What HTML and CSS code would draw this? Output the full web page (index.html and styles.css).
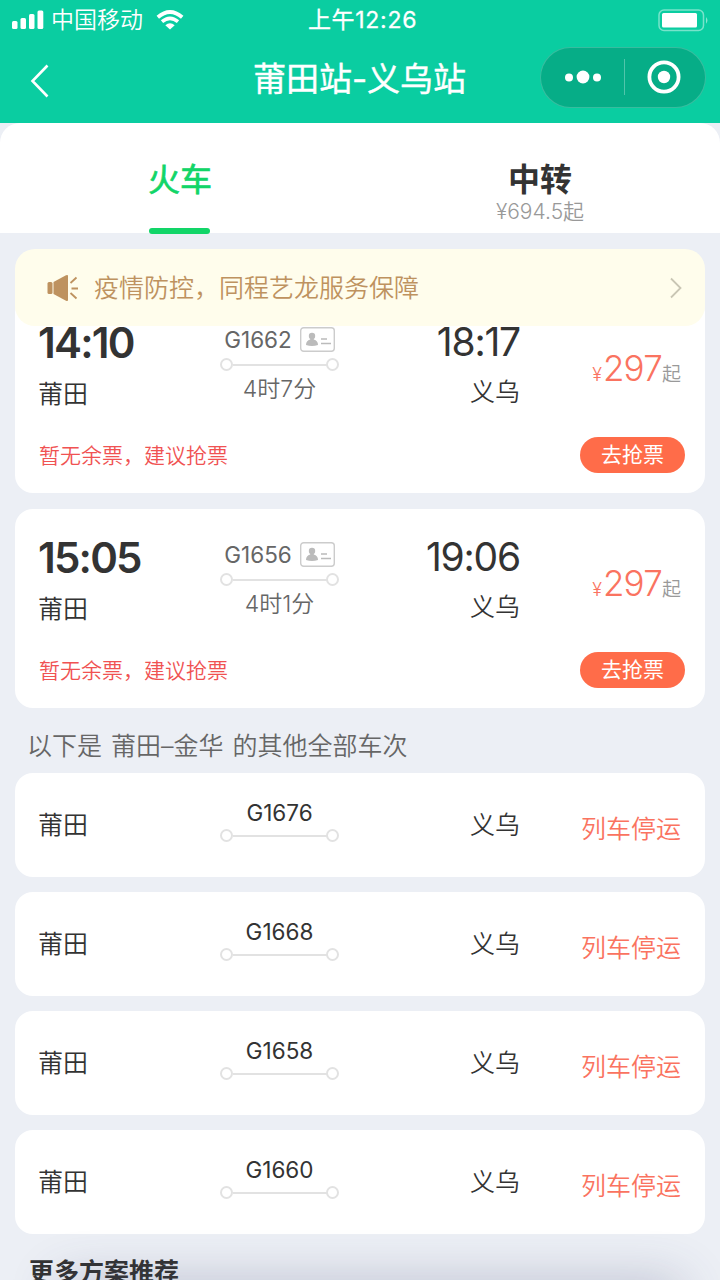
FILE: index.html
```
<!DOCTYPE html>
<html lang="zh-CN">
  <head>
    <meta charset="UTF-8" />
    <meta name="viewport" content="width=device-width, initial-scale=1.0" />
    <title>莆田站-义乌站</title>
    <link rel="stylesheet" href="styles.css">
  </head>

  <body>
    <header class="header">
      <div class="status-bar">
        <div class="carrier">
          <svg class="signal" width="32" height="20" viewBox="0 0 32 20" fill="#fff">
            <rect x="0" y="11" width="5.5" height="8" rx="1.5" />
            <rect x="8.5" y="8" width="5.5" height="11" rx="1.5" />
            <rect x="17" y="4" width="5.5" height="15" rx="1.5" />
            <rect x="25.5" y="0.5" width="5.8" height="18.5" rx="1.5" />
          </svg>
          <span class="carrier-name">中国移动</span>
          <svg class="wifi" width="28" height="20" viewBox="0 0 28 20" fill="none" stroke="#fff">
            <path d="M1.8 7.2 Q14 -3.2 26.2 7.2" stroke-width="3.8" />
            <path d="M6 11.7 Q14 5 22 11.7" stroke-width="3.6" />
            <path d="M9.3 15.2 Q14 11.3 18.7 15.2 L14 19.6 Z" fill="#fff" stroke="none" />
          </svg>
        </div>
        <div class="clock">上午12:26</div>
        <svg class="battery" width="51" height="23" viewBox="0 0 51 23">
          <rect x="1" y="1" width="44.5" height="20.5" rx="5" fill="none" stroke="#fff" stroke-opacity=".45" stroke-width="1.5" />
          <rect x="4" y="4" width="35" height="14.5" rx="1.5" fill="#fff" />
          <path d="M48 8 Q51 11.3 48 14.8 Z" fill="#fff" fill-opacity=".5" />
        </svg>
      </div>
      <div class="nav-bar">
        <svg class="back" width="20" height="34" viewBox="0 0 20 34" fill="none" stroke="#fff" stroke-width="2.6">
          <path d="M17.5 1.5 L2.5 17 L17.5 32.5" />
        </svg>
        <h1 class="title">莆田站-义乌站</h1>
        <div class="capsule">
          <svg width="36" height="14" viewBox="0 0 36 14" fill="#fff">
            <circle cx="4" cy="7.5" r="4" />
            <circle cx="18" cy="7" r="6.4" />
            <circle cx="32" cy="7.5" r="4" />
          </svg>
          <span class="capsule-line"></span>
          <svg width="34" height="34" viewBox="0 0 34 34">
            <circle cx="17" cy="17" r="14.6" fill="none" stroke="#fff" stroke-width="3.8" />
            <circle cx="17" cy="17" r="6.2" fill="#fff" />
          </svg>
        </div>
      </div>
    </header>

    <nav class="tabs">
      <div class="tab tab-active">
        <span class="tab-name">火车</span>
      </div>
      <div class="tab">
        <span class="tab-name">中转</span>
        <span class="tab-price">¥694.5起</span>
      </div>
    </nav>

    <main class="content">
      <div class="notice">
        <svg width="32" height="28" viewBox="0 0 32 28">
          <rect x="0.5" y="8" width="5" height="12" rx="1.5" fill="#be925f" />
          <path d="M6.5 8 L19 1.2 Q21 0.3 21 2 V26 Q21 27.7 19 26.8 L6.5 20 Z" fill="#be925f" />
          <path d="M23.5 9 L29.5 3.5 M24.5 14.5 H31 M23.5 19 L29.5 24.5" stroke="#be925f" stroke-width="1.8" />
        </svg>
        <span class="notice-text">疫情防控，同程艺龙服务保障</span>
        <svg width="14" height="22" viewBox="0 0 14 22" fill="none" stroke="#c9c6b4" stroke-width="1.8">
          <path d="M2 1.5 L11.5 11 L2 20.5" />
        </svg>
      </div>

      <div class="train-list">
        <div class="card">
          <div class="trip">
            <div class="from">
              <div class="time">14:10</div>
              <div class="station">莆田</div>
            </div>
            <div class="middle">
              <div class="code">
                <span>G1662</span>
                <svg width="35" height="25" viewBox="0 0 35 25">
                  <rect x="0.7" y="0.7" width="33.6" height="23.6" rx="3" fill="none" stroke="#ccc" stroke-width="1.4" />
                  <circle cx="12" cy="9" r="3.2" fill="#bbb" />
                  <path d="M6 18 Q6 13.5 10.2 12.5 L10.5 10 H13.5 L13.8 12.5 Q18 13.5 18 18 Q12 20 6 18 Z" fill="#bbb" />
                  <path d="M21 12 H27 M21 16.5 H31" stroke="#bbb" stroke-width="1.4" />
                </svg>
              </div>
              <div class="line"></div>
              <div class="duration">4时7分</div>
            </div>
            <div class="to">
              <div class="time">18:17</div>
              <div class="station">义乌</div>
            </div>
            <div class="price"><span class="yen">¥</span>297<span class="unit">起</span></div>
          </div>
          <div class="card-foot">
            <span class="tip">暂无余票，建议抢票</span>
            <button class="btn">去抢票</button>
          </div>
        </div>

        <div class="card">
          <div class="trip">
            <div class="from">
              <div class="time">15:05</div>
              <div class="station">莆田</div>
            </div>
            <div class="middle">
              <div class="code">
                <span>G1656</span>
                <svg width="35" height="25" viewBox="0 0 35 25">
                  <rect x="0.7" y="0.7" width="33.6" height="23.6" rx="3" fill="none" stroke="#ccc" stroke-width="1.4" />
                  <circle cx="12" cy="9" r="3.2" fill="#bbb" />
                  <path d="M6 18 Q6 13.5 10.2 12.5 L10.5 10 H13.5 L13.8 12.5 Q18 13.5 18 18 Q12 20 6 18 Z" fill="#bbb" />
                  <path d="M21 12 H27 M21 16.5 H31" stroke="#bbb" stroke-width="1.4" />
                </svg>
              </div>
              <div class="line"></div>
              <div class="duration">4时1分</div>
            </div>
            <div class="to">
              <div class="time">19:06</div>
              <div class="station">义乌</div>
            </div>
            <div class="price"><span class="yen">¥</span>297<span class="unit">起</span></div>
          </div>
          <div class="card-foot">
            <span class="tip">暂无余票，建议抢票</span>
            <button class="btn">去抢票</button>
          </div>
        </div>
      </div>

      <p class="list-title">以下是 莆田–金华 的其他全部车次</p>

      <div class="other-list">
        <div class="card card-stop">
          <div class="station">莆田</div>
          <div class="middle">
            <div class="code">G1676</div>
            <div class="line"></div>
          </div>
          <div class="station station-to">义乌</div>
          <div class="stop">列车停运</div>
        </div>
        <div class="card card-stop">
          <div class="station">莆田</div>
          <div class="middle">
            <div class="code">G1668</div>
            <div class="line"></div>
          </div>
          <div class="station station-to">义乌</div>
          <div class="stop">列车停运</div>
        </div>
        <div class="card card-stop">
          <div class="station">莆田</div>
          <div class="middle">
            <div class="code">G1658</div>
            <div class="line"></div>
          </div>
          <div class="station station-to">义乌</div>
          <div class="stop">列车停运</div>
        </div>
        <div class="card card-stop">
          <div class="station">莆田</div>
          <div class="middle">
            <div class="code">G1660</div>
            <div class="line"></div>
          </div>
          <div class="station station-to">义乌</div>
          <div class="stop">列车停运</div>
        </div>
      </div>

      <h2 class="more-title">更多方案推荐</h2>
    </main>
  </body>
</html>
```
FILE: styles.css
```
*,
*::before,
*::after {
  box-sizing: border-box;
}

body {
  position: relative;
  height: 1280px;
  margin: 0;
  overflow: hidden;
  background-color: #eceff5;
  color: #333;
  font-family: Inter, "Noto Sans CJK SC", sans-serif;
}

/* shadow of the bottom sheet below the screen */
body::after {
  content: "";
  position: absolute;
  left: 60px;
  right: 40px;
  top: 1282px;
  height: 40px;
  box-shadow: 0 0 50px rgba(60, 65, 110, 0.3);
}

svg {
  display: block;
  flex-shrink: 0;
}

.header {
  height: 123px;
  background-color: #0acda1;
  color: #fff;
}

.status-bar {
  display: grid;
  grid-template-columns: 1fr auto 1fr;
  align-items: center;
  height: 40px;
  padding: 0 11px 0 12px;
}

.carrier {
  display: flex;
  align-items: center;
}

.carrier-name {
  margin: 0 13px 0 7px;
  font-size: 23px;
  font-weight: 350;
  line-height: 40px;
}

.clock {
  margin-left: 4px;
  font-size: 23px;
  font-weight: 400;
  line-height: 40px;
  letter-spacing: 0.7px;
  -webkit-text-stroke: 0.3px #fff;
}

.battery {
  justify-self: end;
}

.nav-bar {
  display: grid;
  grid-template-columns: 1fr auto 1fr;
  align-items: center;
  height: 74px;
  padding: 0 14px 0 30px;
}

.title {
  margin: 3px 0 0 -17px;
  font-size: 33px;
  font-weight: 400;
  line-height: 48px;
  -webkit-text-stroke: 0.4px #fff;
}

.back {
  margin-top: 7px;
}

.capsule {
  display: flex;
  justify-content: space-between;
  align-items: center;
  justify-self: end;
  width: 166px;
  height: 61px;
  padding: 0 24px;
  border: 1px solid rgba(255, 255, 255, 0.2);
  border-radius: 31px;
  background-color: #06ad87;
}

.capsule-line {
  width: 1px;
  height: 36px;
  background-color: rgba(255, 255, 255, 0.3);
}

.tabs {
  display: flex;
  height: 110px;
  border-radius: 20px 20px 0 0;
  background-color: #fff;
}

.tab {
  display: flex;
  flex: 1;
  flex-direction: column;
  align-items: center;
  padding-top: 35px;
}

.tab-name {
  font-size: 32px;
  font-weight: 700;
  line-height: 44px;
}

.tab-active .tab-name {
  color: #12d568;
  font-weight: 400;
  -webkit-text-stroke: 0.7px #12d568;
}

.tab-active::after {
  content: "";
  flex-shrink: 0;
  width: 61px;
  height: 6px;
  margin-top: 26px;
  margin-right: 1px;
  border-radius: 3px;
  background-color: #12d568;
}

.tab-price {
  color: #999;
  font-size: 21px;
  font-weight: 350;
  line-height: 20px;
}

.content {
  padding: 16px 15px 0;
}

.notice {
  position: relative;
  z-index: 1;
  display: flex;
  align-items: center;
  height: 77px;
  padding: 0 22px 0 32px;
  border-radius: 20px;
  background-color: #fffdec;
}

.notice-text {
  flex: 1;
  margin: -3px 0 0 15px;
  color: #be925f;
  font-size: 25px;
  font-weight: 350;
}

/* the list is scrolled a little under the notice */
.train-list {
  margin-top: -32px;
}

.card {
  border-radius: 18px;
  background-color: #fff;
}

.train-list .card {
  height: 199px;
  padding: 24px 24px 0;
}

.train-list .card + .card {
  margin-top: 16px;
}

.trip,
.card-stop {
  display: grid;
  grid-template-columns: 181px 119px 181px 1fr;
}

.trip {
  height: 94px;
}

.from .time {
  height: 48px;
  margin: 0 0 10px -1px;
  font-size: 42px;
  font-weight: 600;
  line-height: 49px;
  letter-spacing: -1.8px;
}

.to {
  text-align: right;
}

.to .time {
  height: 46px;
  margin-bottom: 10px;
  font-size: 39px;
  font-weight: 400;
  line-height: 48px;
  letter-spacing: -1.2px;
}

.station {
  height: 36px;
  font-size: 25px;
  font-weight: 350;
  line-height: 37px;
  text-indent: -1px;
}

.trip .middle {
  padding-top: 6px;
}

.code {
  display: flex;
  justify-content: center;
  align-items: center;
  gap: 8px;
  height: 30px;
  font-size: 22.5px;
  font-weight: 400;
}

.trip .code,
.duration {
  color: #666;
}

.line {
  display: flex;
  justify-content: space-between;
  align-items: center;
  height: 13px;
  margin-top: 4px;
  background: linear-gradient(#e2e2e2, #e2e2e2) center / 94px 2px no-repeat;
}

.line::before,
.line::after {
  content: "";
  width: 13px;
  height: 13px;
  border: 2px solid #e2e2e2;
  border-radius: 50%;
}

.duration {
  margin-top: 2px;
  font-size: 23px;
  font-weight: 350;
  line-height: 32px;
  text-align: center;
}

.price {
  padding-top: 30px;
  color: #fa7360;
  font-size: 35px;
  font-weight: 350;
  line-height: 40px;
  text-align: right;
  letter-spacing: -0.8px;
  white-space: nowrap;
}

.yen {
  margin-right: 1px;
  font-size: 18px;
  letter-spacing: 0;
}

.unit {
  color: #999;
  font-size: 19px;
  letter-spacing: 0;
}

.card-foot {
  display: flex;
  justify-content: space-between;
  align-items: center;
  height: 36px;
  margin: 25px -4px 0 0;
}

.tip {
  margin-top: -2px;
  color: #f05252;
  font-size: 21px;
  font-weight: 350;
}

.btn {
  width: 105px;
  height: 36px;
  padding: 0;
  border: 0;
  border-radius: 18px;
  background-color: #ff6c49;
  color: #fff;
  font-family: inherit;
  font-size: 21px;
  line-height: 34px;
}

.list-title {
  height: 65px;
  margin: 0;
  padding: 20px 12px 0;
  color: #666;
  font-size: 25px;
  font-weight: 350;
  line-height: 37px;
  word-spacing: 2px;
}

.other-list {
  display: grid;
  gap: 15px;
}

.card-stop {
  height: 104px;
  padding: 24px 24px 0;
}

.card-stop .station {
  margin-top: 10px;
}

.card-stop .line {
  margin-top: 2px;
}

.station-to {
  text-align: right;
}

.stop {
  margin-top: 14px;
  color: #fa7360;
  font-size: 25px;
  font-weight: 350;
  line-height: 37px;
  text-align: right;
}

.more-title {
  margin: 20px 0 0 14px;
  font-size: 25px;
  font-weight: 700;
  line-height: 36px;
}
```
